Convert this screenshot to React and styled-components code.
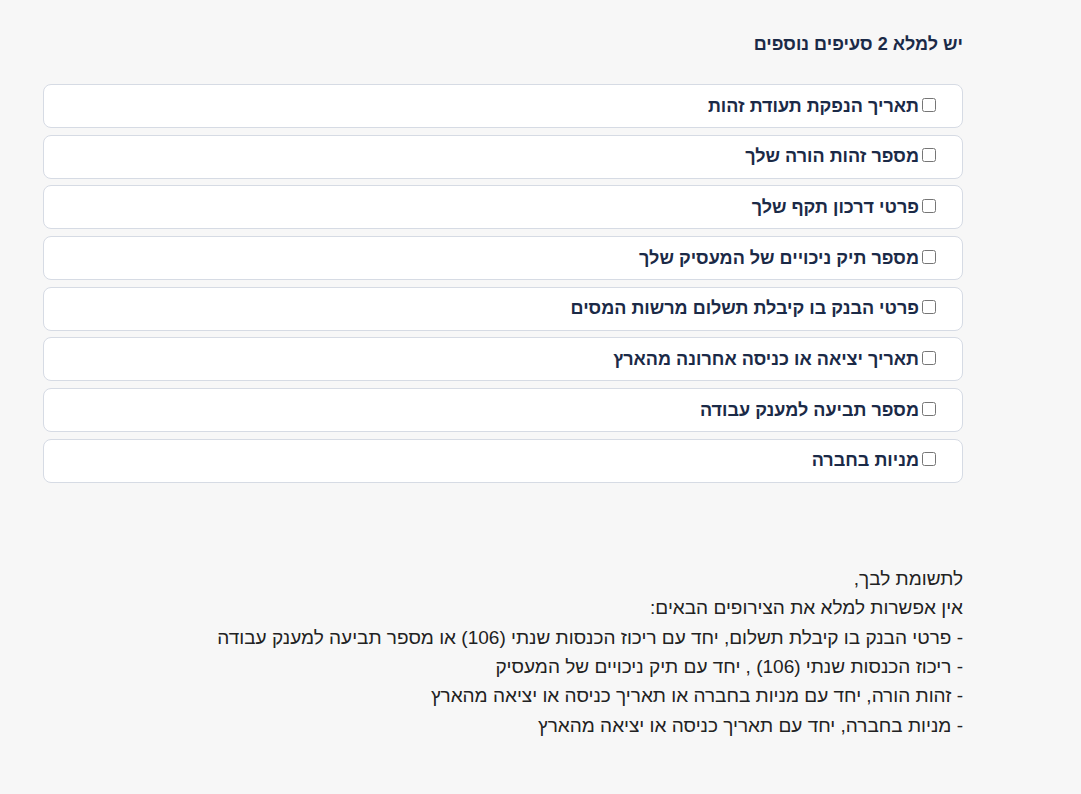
import styled, { createGlobalStyle } from 'styled-components';

const GlobalStyle = createGlobalStyle`
  html, body {
    margin: 0;
    padding: 0;
    background: #f7f7f7;
  }
  body {
    font-family: "Liberation Sans", Arial, sans-serif;
  }
`;

const Page = styled.div`
  direction: rtl;
  width: 920px;
  margin-left: 43px;
  padding-top: 32px;
  padding-bottom: 40px;
`;

const Title = styled.h2`
  margin: 0 0 28px;
  font-size: 18px;
  font-weight: 700;
  color: #1b2a47;
  line-height: 24px;
`;

const List = styled.div`
  display: flex;
  flex-direction: column;
  gap: 6.7px;
`;

const Item = styled.label`
  box-sizing: border-box;
  display: flex;
  align-items: center;
  gap: 3px;
  height: 44px;
  padding: 0 26px;
  background: #fff;
  border: 1px solid #d6dbe4;
  border-radius: 8px;
  font-size: 18px;
  font-weight: 700;
  color: #1b2a47;
  cursor: pointer;
`;

const Box = styled.input`
  width: 14px;
  height: 14px;
  margin: 0 0 3px;
`;

const Notice = styled.div`
  margin-top: 81px;
  font-size: 19px;
  line-height: 29.4px;
  color: #222;
`;

const items = [
  'תאריך הנפקת תעודת זהות',
  'מספר זהות הורה שלך',
  'פרטי דרכון תקף שלך',
  'מספר תיק ניכויים של המעסיק שלך',
  'פרטי הבנק בו קיבלת תשלום מרשות המסים',
  'תאריך יציאה או כניסה אחרונה מהארץ',
  'מספר תביעה למענק עבודה',
  'מניות בחברה',
];

const notes = [
  'לתשומת לבך,',
  'אין אפשרות למלא את הצירופים הבאים:',
  '- פרטי הבנק בו קיבלת תשלום, יחד עם ריכוז הכנסות שנתי (106) או מספר תביעה למענק עבודה',
  '- ריכוז הכנסות שנתי (106) , יחד עם תיק ניכויים של המעסיק',
  '- זהות הורה, יחד עם מניות בחברה או תאריך כניסה או יציאה מהארץ',
  '- מניות בחברה, יחד עם תאריך כניסה או יציאה מהארץ',
];

export default function App() {
  return (
    <>
      <GlobalStyle />
      <Page>
        <Title>יש למלא 2 סעיפים נוספים</Title>
        <List>
          {items.map((text) => (
            <Item key={text}>
              <Box type="checkbox" />
              {text}
            </Item>
          ))}
        </List>
        <Notice>
          {notes.map((line) => (
            <div key={line}>{line}</div>
          ))}
        </Notice>
      </Page>
    </>
  );
}
